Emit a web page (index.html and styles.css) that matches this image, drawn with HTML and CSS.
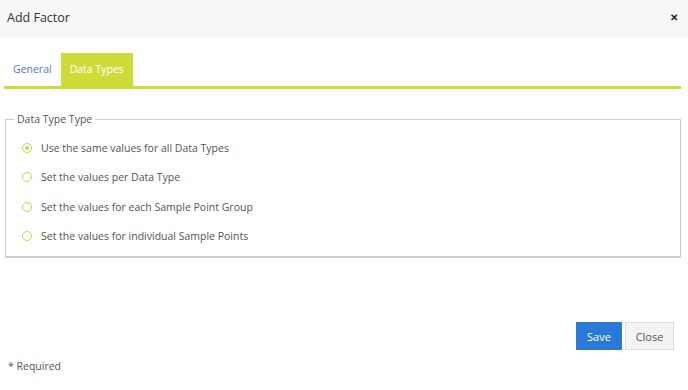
FILE: index.html
```html
<!DOCTYPE html>
<html lang="en">
<head>
  <meta charset="UTF-8">
  <title>Add Factor</title>
  <link rel="stylesheet" href="styles.css">
</head>
<body>
  <div class="modal">
    <div class="modal-header">
      <div class="modal-title">Add Factor</div>
      <span class="close-x">&#x2715;</span>
    </div>

    <div class="modal-body">
      <div class="tabs">
        <a href="#" class="tab">General</a>
        <a href="#" class="tab active">Data Types</a>
      </div>

      <fieldset class="type-box">
        <legend>Data Type Type</legend>
        <label class="radio-row"><span class="radio checked"></span>Use the same values for all Data Types</label>
        <label class="radio-row"><span class="radio"></span>Set the values per Data Type</label>
        <label class="radio-row"><span class="radio"></span>Set the values for each Sample Point Group</label>
        <label class="radio-row"><span class="radio"></span>Set the values for individual Sample Points</label>
      </fieldset>
    </div>

    <div class="modal-footer">
      <button class="save-btn">Save</button>
      <button class="close-btn">Close</button>
    </div>

    <div class="required">* Required</div>
  </div>
</body>
</html>
```

FILE: styles.css
```css
* {
  margin: 0;
  padding: 0;
  box-sizing: border-box;
}

body {
  font-family: 'Open Sans', sans-serif;
  font-size: 10.5px;
  color: #555;
  background-color: white;
}

.modal-header {
  height: 38px;
  background-color: #f7f7f7;
  display: flex;
  justify-content: space-between;
  align-items: center;
  padding: 0 10px 4px 7px;
}

.modal-title {
  font-size: 12.5px;
  color: #333;
}

.close-x {
  font-size: 10px;
  font-weight: bold;
  color: #222;
}

.modal-body {
  padding: 15px 7px 0 4px;
}

.tabs {
  display: flex;
  border-bottom: 3px solid #cfdb38;
}

.tab {
  padding: 9px 9px 9px;
  color: #4a7ac8;
  text-decoration: none;
  height: 33px;
  line-height: 15px;
}

.tab.active {
  background-color: #cfdb38;
  color: white;
}

.type-box {
  margin: 23px 0 0 1px;
  border: 1px solid #ccc;
  border-bottom-width: 2px;
  padding: 7px 8px 5px;
}

.type-box legend {
  padding: 0 3px;
  line-height: 14px;
  color: #555;
}

.radio-row {
  display: flex;
  align-items: center;
  height: 29.5px;
  padding-left: 8px;
  color: #555;
}

.radio {
  width: 10px;
  height: 10px;
  border: 1px solid #c9d642;
  border-radius: 50%;
  margin-right: 9px;
  display: flex;
  align-items: center;
  justify-content: center;
}

.radio.checked::after {
  content: '';
  width: 4px;
  height: 4px;
  border-radius: 50%;
  background-color: #c9d642;
}

.modal-footer {
  display: flex;
  justify-content: flex-end;
  gap: 3px;
  padding: 0 14px 0 0;
  margin-top: 64px;
}

.save-btn {
  font-family: 'Open Sans', sans-serif;
  font-size: 11px;
  width: 46px;
  height: 28px;
  background-color: #2b79d6;
  color: white;
  border: 1px solid #2b79d6;
}

.close-btn {
  font-family: 'Open Sans', sans-serif;
  font-size: 11px;
  width: 49px;
  height: 28px;
  background-color: #f3f3f3;
  color: #555;
  border: 1px solid #ddd;
}

.required {
  margin-top: 9px;
  padding-left: 8px;
  color: #555;
}
```
